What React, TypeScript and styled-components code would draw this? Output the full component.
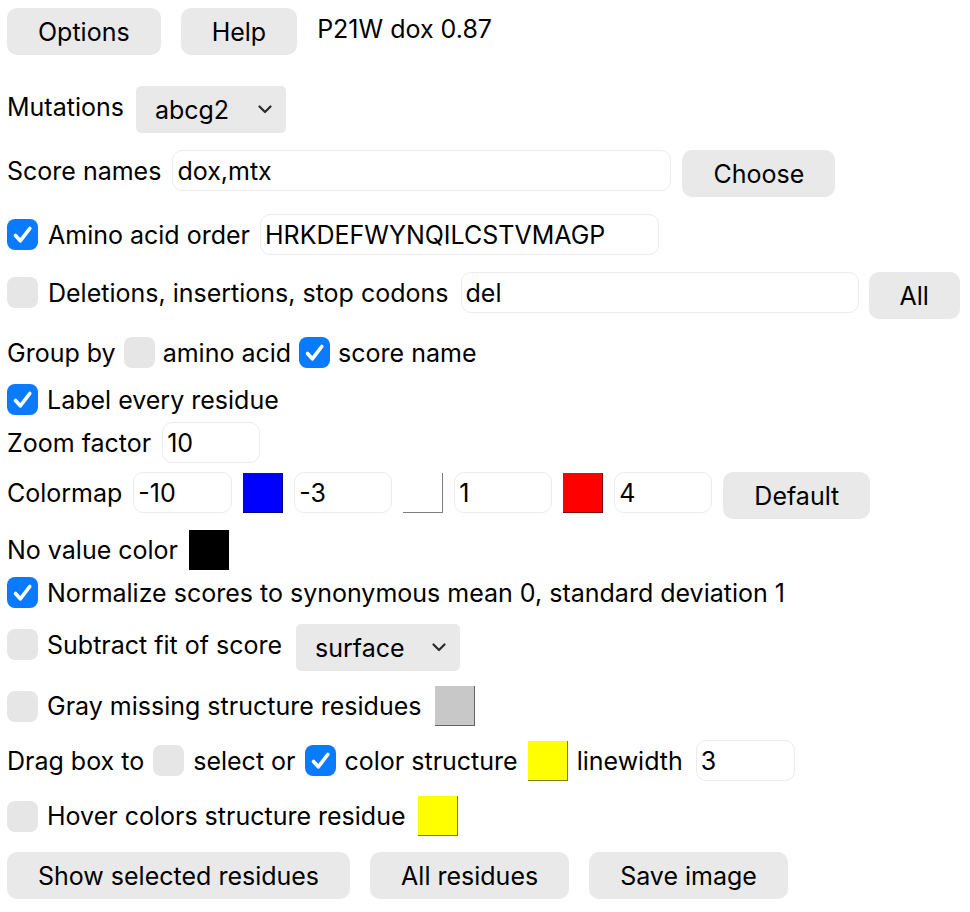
import React from "react";
import styled, { createGlobalStyle } from "styled-components";

const GlobalStyle = createGlobalStyle`
  html, body { margin: 0; padding: 0; background: #ffffff; }
  body {
    font-family: Inter, "Liberation Sans", Arial, sans-serif;
    font-size: 25px;
    color: #000000;
  }
  * { box-sizing: border-box; }
`;

const Panel = styled.div`
  display: flex;
  flex-direction: column;
  padding: 8px 7px;
  width: 970px;
`;

const Row = styled.div<{ $mt: number; $gap?: number }>`
  display: flex;
  align-items: center;
  gap: ${(p) => p.$gap ?? 11}px;
  margin-top: ${(p) => p.$mt}px;
`;

const Label = styled.span`
  flex: none;
  line-height: 30px;
  white-space: nowrap;
`;

const Button = styled.button`
  flex: none;
  height: 47px;
  margin: 0 9px -6px 0;
  padding: 0 31px;
  border: none;
  border-radius: 10px;
  background: #e9e9e9;
  color: #000;
  font: inherit;
  white-space: nowrap;
  &:last-child { margin-right: 0; }
`;

const SelectBox = styled.div<{ $w: number; $ml?: number }>`
  flex: none;
  display: flex;
  align-items: center;
  justify-content: space-between;
  width: ${(p) => p.$w}px;
  height: 47px;
  margin: 0 0 -6px ${(p) => p.$ml ?? 0}px;
  padding: 0 14px 0 19px;
  border-radius: 5px;
  background: #e9e9e9;
`;

const TextInput = styled.div<{ $w: number; $ml?: number }>`
  flex: none;
  display: flex;
  align-items: center;
  width: ${(p) => p.$w}px;
  height: 41px;
  margin-left: ${(p) => p.$ml ?? 0}px;
  padding: 0 4px;
  border: 1.5px solid #ececec;
  border-radius: 10px;
  background: #ffffff;
  white-space: nowrap;
`;

const Box = styled.div<{ $on?: boolean }>`
  display: flex;
  align-items: center;
  justify-content: center;
  flex: none;
  width: 31px;
  height: 31px;
  border-radius: 8px;
  background: ${(p) => (p.$on ? "#0a7aff" : "#e6e6e6")};
`;

const Swatch = styled.div<{ $c: string; $ml?: number }>`
  flex: none;
  width: 40px;
  height: 40px;
  margin-left: ${(p) => p.$ml ?? 0}px;
  background: ${(p) => p.$c};
  border-right: 1.5px solid rgba(0, 0, 0, 0.5);
  border-bottom: 1.5px solid rgba(0, 0, 0, 0.5);
`;

const Check = ({ on }: { on?: boolean }) => (
  <Box $on={on}>
    {on && (
      <svg width="31" height="31" viewBox="0 0 31 31">
        <path
          d="M8.5 16.5 L13.3 21.8 L22.8 9.5"
          fill="none"
          stroke="#ffffff"
          strokeWidth="3.6"
          strokeLinecap="round"
          strokeLinejoin="round"
        />
      </svg>
    )}
  </Box>
);

const Select = ({ value, w, ml }: { value: string; w: number; ml?: number }) => (
  <SelectBox $w={w} $ml={ml}>
    <span>{value}</span>
    <svg width="14" height="9" viewBox="0 0 14 9">
      <path
        d="M1.5 1.5 L7 7 L12.5 1.5"
        fill="none"
        stroke="#2a2a2a"
        strokeWidth="2.2"
        strokeLinecap="round"
        strokeLinejoin="round"
      />
    </svg>
  </SelectBox>
);

export default function App() {
  return (
    <>
      <GlobalStyle />
      <Panel>
        <Row $mt={0} $gap={11}>
          <Button>Options</Button>
          <Button>Help</Button>
          <Label>P21W dox 0.87</Label>
        </Row>

        <Row $mt={37}>
          <Label>Mutations</Label>
          <Select value="abcg2" w={150} ml={1} />
        </Row>

        <Row $mt={23}>
          <Label>Score names</Label>
          <TextInput $w={499}>dox,mtx</TextInput>
          <Button>Choose</Button>
        </Row>

        <Row $mt={23} $gap={10}>
          <Check on />
          <Label>Amino acid order</Label>
          <TextInput $w={399}>HRKDEFWYNQILCSTVMAGP</TextInput>
        </Row>

        <Row $mt={17} $gap={10}>
          <Check />
          <Label>Deletions, insertions, stop codons</Label>
          <TextInput $w={398} $ml={2}>del</TextInput>
          <Button>All</Button>
        </Row>

        <Row $mt={24} $gap={8}>
          <Label>Group by</Label>
          <Check />
          <Label>amino acid</Label>
          <Check on />
          <Label>score name</Label>
        </Row>

        <Row $mt={16} $gap={9}>
          <Check on />
          <Label>Label every residue</Label>
        </Row>

        <Row $mt={7}>
          <Label>Zoom factor</Label>
          <TextInput $w={98}>10</TextInput>
        </Row>

        <Row $mt={9}>
          <Label>Colormap</Label>
          <TextInput $w={99}>-10</TextInput>
          <Swatch $c="#0000ff" />
          <TextInput $w={98}>-3</TextInput>
          <Swatch $c="#ffffff" />
          <TextInput $w={98}>1</TextInput>
          <Swatch $c="#ff0000" />
          <TextInput $w={98}>4</TextInput>
          <Button>Default</Button>
        </Row>

        <Row $mt={17}>
          <Label>No value color</Label>
          <Swatch $c="#000000" />
        </Row>

        <Row $mt={7} $gap={9}>
          <Check on />
          <Label>Normalize scores to synonymous mean 0, standard deviation 1</Label>
        </Row>

        <Row $mt={16} $gap={9}>
          <Check />
          <Label>Subtract fit of score</Label>
          <Select value="surface" w={164} ml={5} />
        </Row>

        <Row $mt={21} $gap={9}>
          <Check />
          <Label>Gray missing structure residues</Label>
          <Swatch $c="#c8c8c8" $ml={5} />
        </Row>

        <Row $mt={14} $gap={9}>
          <Label>Drag box to</Label>
          <Check />
          <Label>select or</Label>
          <Check on />
          <Label>color structure</Label>
          <Swatch $c="#ffff00" $ml={1} />
          <Label>linewidth</Label>
          <TextInput $w={99} $ml={4}>3</TextInput>
        </Row>

        <Row $mt={15} $gap={9}>
          <Check />
          <Label>Hover colors structure residue</Label>
          <Swatch $c="#ffff00" $ml={3} />
        </Row>

        <Row $mt={16}>
          <Button>Show selected residues</Button>
          <Button>All residues</Button>
          <Button>Save image</Button>
        </Row>
      </Panel>
    </>
  );
}
